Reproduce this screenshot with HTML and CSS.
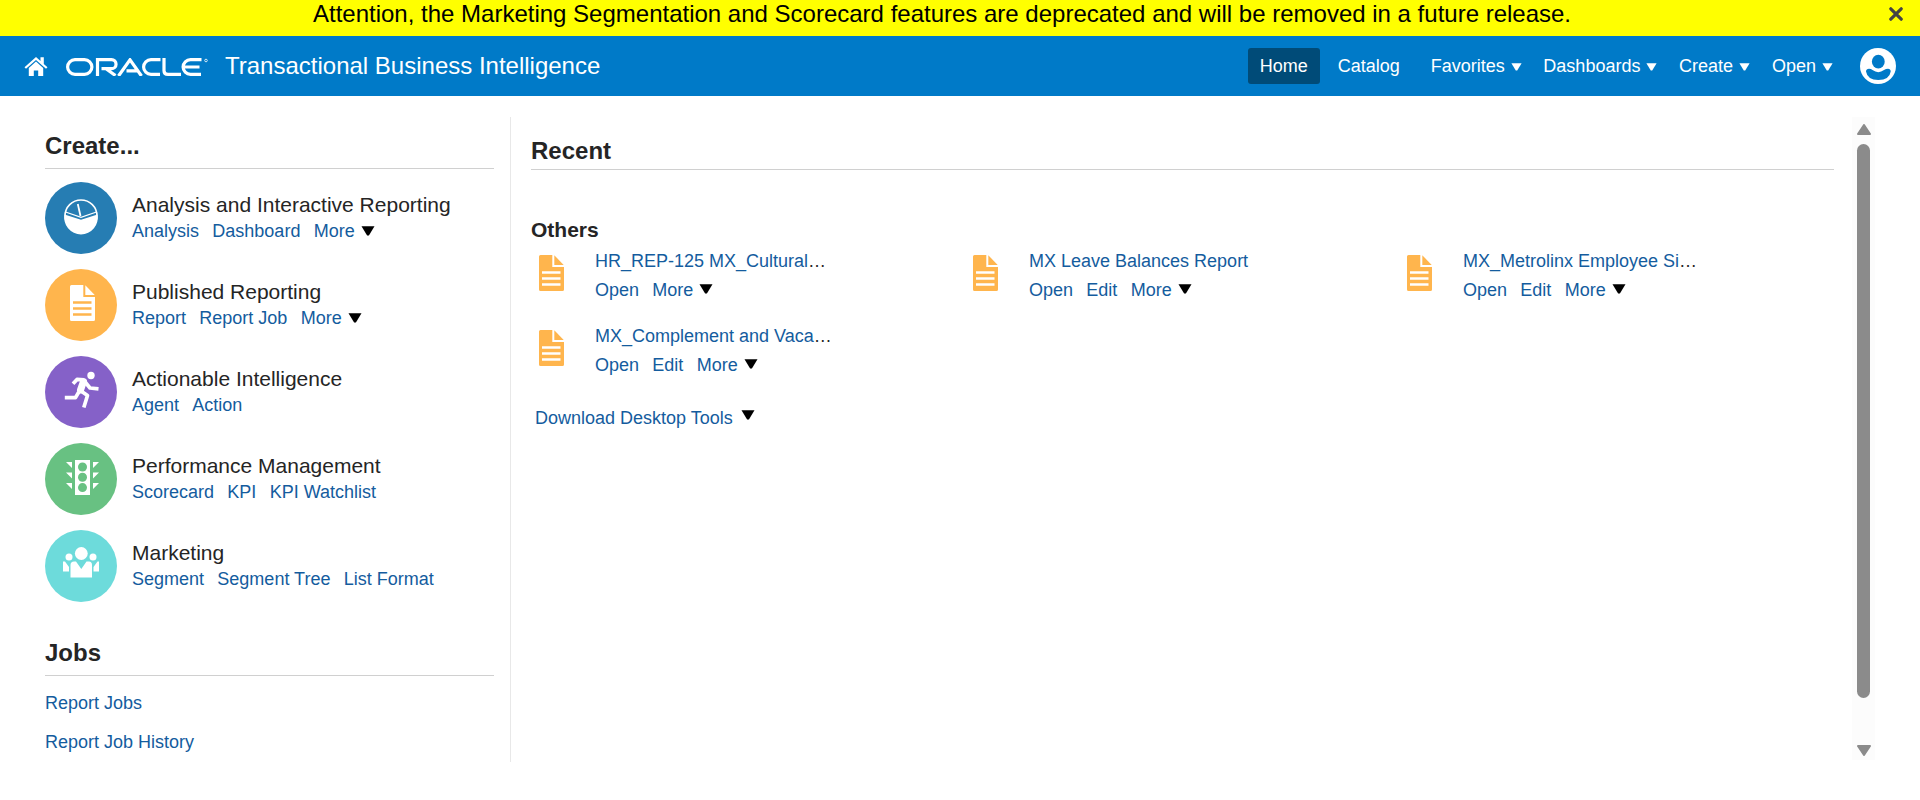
FILE: index.html
```html
<!DOCTYPE html>
<html lang="en">
<head>
<meta charset="utf-8">
<title>Transactional Business Intelligence</title>
<link rel="stylesheet" href="styles.css">
</head>
<body>
<svg width="0" height="0" class="defs">
  <symbol id="doc" viewBox="0 0 25 36">
    <path fill="currentColor" fill-rule="evenodd" d="M1.500 0H13.300V12H25V34.500Q25 36 23.500 36H1.500Q0 36 0 34.500V1.500Q0 0 1.500 0ZM3 16.300V18.700H21.500V16.300ZM3 22.300V24.700H21.500V22.300ZM3 28.300V30.700H21.500V28.300Z"/>
    <path fill="currentColor" d="M15.300 .3L24.700 10H15.300Z"/>
  </symbol>
  <symbol id="tri" viewBox="0 0 14 10"><path fill="currentColor" d="M.5 .3H13.500L7.900 9.600H6.100Z"/></symbol>
</svg>
<div class="notice">
  <span class="notice-text">Attention, the Marketing Segmentation and Scorecard features are deprecated and will be removed in a future release.</span>
  <svg class="close" viewBox="0 0 14 14"><path d="M1.800 1.800L12.200 12.200M12.200 1.800L1.800 12.200" stroke="#444" stroke-width="3.200" stroke-linecap="round"/></svg>
</div>
<header class="bar">
  <svg class="home" viewBox="0 0 23 19"><path fill="#fff" d="M11.500 0L16 4V.3H19.300V7L23 10.300L21.500 11.800L11.500 2.900L1.500 11.800L0 10.300Z"/><path fill="#fff" d="M11.500 4.500L18.700 11V19H13.700V13.500H9.300V19H4.300V11Z"/></svg>
  <svg class="logo" viewBox="0 0 142 18" fill="none" stroke="#fff" stroke-width="3.200">
    <path d="M9 1.600H18.500A7.400 7.400 0 0 1 18.500 16.400H9A7.400 7.400 0 0 1 9 1.600Z"/>
    <path d="M31.500 18V1.600H45.500A4.500 4.500 0 0 1 45.500 10.700H35.500M40 10.700L49.500 17.600"/>
    <path d="M52.500 18L64 1.800L75.500 18M60.500 12.800H71.500"/>
    <path d="M94.500 1.600H85A7.400 7.400 0 0 0 85 16.400H94"/>
    <path d="M98 0V12.800Q98 16.400 102 16.400H115"/>
    <path d="M135.500 1.600H124.500A7.400 7.400 0 0 0 124.500 16.400H135M118 9H133.500"/>
    <circle cx="140" cy="2.500" r="1.300" stroke-width=".8"/>
  </svg>
  <h1>Transactional Business Intelligence</h1>
  <nav>
    <a class="active">Home</a>
    <a class="catalog">Catalog</a>
    <a class="fav">Favorites<svg><use href="#tri"/></svg></a>
    <a class="dash">Dashboards<svg><use href="#tri"/></svg></a>
    <a class="create">Create<svg><use href="#tri"/></svg></a>
    <a class="open">Open<svg><use href="#tri"/></svg></a>
  </nav>
  <svg class="user" viewBox="0 0 36 36"><circle cx="18" cy="18" r="18" fill="#fff"/><ellipse cx="18.300" cy="13.700" rx="6.400" ry="6.900" fill="#007ac8"/><path d="M6 23.500Q6.200 20.800 9 20.700Q11 20.700 12.500 22Q18.300 26.300 24 22Q26 20.700 28 20.700Q30.600 20.800 30.700 23.500Q29.500 32 18.300 32Q7.500 32 6 23.500Z" fill="#007ac8"/></svg>
</header>
<main>
  <aside>
    <h2 class="create-title">Create...</h2>
    <section class="item">
      <svg class="badge" viewBox="0 0 72 72"><circle cx="36" cy="36" r="36" fill="#267db3"/><circle cx="36" cy="34" r="16" fill="none" stroke="#fff" stroke-width="1.600"/><path d="M19.500 32.500L36 37.800L52.500 32.500A16.800 16.800 0 1 1 19.500 32.500Z" fill="#fff"/><path d="M20.500 30L36 35.300L51.500 30" fill="none" stroke="#fff" stroke-width="1.200"/><path d="M32.800 22L35.500 34" stroke="#fff" stroke-width="1.800"/></svg>
      <div><h3>Analysis and Interactive Reporting</h3><p class="links"><a>Analysis</a><a>Dashboard</a><a>More</a><svg><use href="#tri"/></svg></p></div>
    </section>
    <section class="item">
      <svg class="badge" viewBox="0 0 72 72"><circle cx="36" cy="36" r="36" fill="#ffb54d"/><use href="#doc" x="25" y="16" width="25" height="36" color="#fff"/></svg>
      <div><h3>Published Reporting</h3><p class="links"><a>Report</a><a>Report Job</a><a>More</a><svg><use href="#tri"/></svg></p></div>
    </section>
    <section class="item">
      <svg class="badge" viewBox="0 0 72 72"><circle cx="36" cy="36" r="36" fill="#8561c8"/><circle cx="46" cy="19.500" r="3.700" fill="#fff"/><path d="M28 27.800L32 23.400L39 23.800M40.500 26.500L45 32L53.500 32.800M36 35L42.500 39.500L38.800 51.500M33.800 36L30.500 41.600H19.800" fill="none" stroke="#fff" stroke-width="3.700" stroke-linejoin="round"/><path d="M38.500 25.500L35.500 34" stroke="#fff" stroke-width="7" stroke-linecap="round"/></svg>
      <div><h3>Actionable Intelligence</h3><p class="links"><a>Agent</a><a>Action</a></p></div>
    </section>
    <section class="item">
      <svg class="badge" viewBox="0 0 72 72"><circle cx="36" cy="36" r="36" fill="#68c182"/><rect x="30" y="17" width="15" height="35" fill="#fff"/><g fill="#68c182"><circle cx="37.500" cy="24" r="4.500"/><circle cx="37.500" cy="34.300" r="4.500"/><circle cx="37.500" cy="44.600" r="4.500"/></g><path fill="#fff" d="M21 19H27V25ZM21 29.500H27V35.500ZM21 40H27V46ZM54 19H48V25ZM54 29.500H48V35.500ZM54 40H48V46Z"/></svg>
      <div><h3>Performance Management</h3><p class="links"><a>Scorecard</a><a>KPI</a><a>KPI Watchlist</a></p></div>
    </section>
    <section class="item">
      <svg class="badge" viewBox="0 0 72 72"><circle cx="36" cy="36" r="36" fill="#6ddbdb"/><g fill="#fff"><circle cx="36.300" cy="23.500" r="6.400"/><circle cx="24" cy="27" r="3.500"/><circle cx="48" cy="27" r="3.500"/><path d="M25.500 47.500V35Q25.500 31.500 29 31.500H31L36.300 39L41.500 31.500H44Q47 31.500 47 35V47.500ZM18 31.500H20L24 37V41.500H18ZM54 31.500H52.500L48.500 37V41.500H54Z"/></g></svg>
      <div><h3>Marketing</h3><p class="links"><a>Segment</a><a>Segment Tree</a><a>List Format</a></p></div>
    </section>
    <h2 class="jobs-title">Jobs</h2>
    <ul class="jobs"><li><a>Report Jobs</a></li><li><a>Report Job History</a></li></ul>
  </aside>
  <section class="recent">
    <h2 class="recent-title">Recent</h2>
    <h4>Others</h4>
    <div class="grid">
      <article><svg class="doc"><use href="#doc"/></svg><div><p class="name"><a>HR_REP-125 MX_Cultural</a>…</p><p class="links"><a>Open</a><a>More</a><svg><use href="#tri"/></svg></p></div></article>
      <article><svg class="doc"><use href="#doc"/></svg><div><p class="name"><a>MX Leave Balances Report</a></p><p class="links"><a>Open</a><a>Edit</a><a>More</a><svg><use href="#tri"/></svg></p></div></article>
      <article><svg class="doc"><use href="#doc"/></svg><div><p class="name"><a>MX_Metrolinx Employee Si</a>…</p><p class="links"><a>Open</a><a>Edit</a><a>More</a><svg><use href="#tri"/></svg></p></div></article>
      <article><svg class="doc"><use href="#doc"/></svg><div><p class="name"><a>MX_Complement and Vaca</a>…</p><p class="links"><a>Open</a><a>Edit</a><a>More</a><svg><use href="#tri"/></svg></p></div></article>
    </div>
    <p class="links download"><a>Download Desktop Tools</a><svg><use href="#tri"/></svg></p>
  </section>
  <div class="scroll">
    <svg class="arrow" viewBox="0 0 14 11"><path d="M7 1L13 10H1Z" fill="#8b8b8b" stroke="#8b8b8b" stroke-width="2" stroke-linejoin="round"/></svg>
    <div class="thumb"></div>
    <svg class="arrow down" viewBox="0 0 14 11"><path d="M7 10L1 1H13Z" fill="#8b8b8b" stroke="#8b8b8b" stroke-width="2" stroke-linejoin="round"/></svg>
  </div>
</main>
</body>
</html>
```
FILE: styles.css
```css
* { box-sizing: border-box; margin: 0; padding: 0; }
body { font-family: "Liberation Sans", Arial, sans-serif; font-size: 18px; color: #252525; background: #fff; height: 800px; overflow: hidden; }
.defs { display: block; height: 0; }
svg { flex: none; }
.notice { height: 36px; background: #ff0; color: #000; display: flex; align-items: flex-start; padding: 0 17px 0 0; }
.notice-text { flex: 1; padding-right: 5px; text-align: center; font-size: 24px; line-height: 28px; white-space: nowrap; }
.close { width: 14px; height: 14px; margin-top: 7px; }
.bar { height: 60px; background: #007ac8; color: #fff; display: flex; align-items: center; padding: 0 24px 0 24px; }
.home { width: 24px; height: 19px; margin-top: 1px; }
.logo { width: 142px; height: 18px; margin: 2px 0 0 18px; }
h1 { font-weight: 400; font-size: 24px; line-height: 28px; margin-left: 17px; white-space: nowrap; }
nav { display: flex; align-items: center; margin-left: auto; }
nav a { white-space: nowrap; display: flex; align-items: center; }
nav svg { width: 11px; height: 8px; margin: 2px 0 0 6px; }
.active { background: #004b78; border-radius: 3px; height: 36px; width: 72px; justify-content: center; }
.catalog { margin-left: 18px; }
.fav { margin-left: 31px; }
.dash, .create { margin-left: 21.500px; }
.open { margin-left: 22px; }
.user { width: 36px; height: 36px; margin-left: 27px; }
main { display: flex; padding-top: 21px; height: 666px; }
aside { width: 511px; flex: none; border-right: 1px solid #e8e8e8; padding: 14px 16px 0 45px; margin-right: 0; }
h2 { font-size: 24px; line-height: 28px; border-bottom: 1px solid #d0d0d0; white-space: nowrap; }
.create-title { height: 38px; padding-top: 1px; margin-bottom: 13px; }
.item { display: flex; gap: 15px; height: 72px; margin-bottom: 15px; }
.badge { width: 72px; height: 72px; }
h3 { font-size: 21px; font-weight: 400; line-height: 24px; padding-top: 11px; white-space: nowrap; }
a { color: #145c9e; }
nav a { color: #fff; }
.links { display: flex; line-height: 20px; margin-top: 4px; white-space: nowrap; gap: 13.300px; }
.links svg { color: #000; width: 14px; height: 10px; margin: 5px 0 0 -7.300px; }
.jobs-title { height: 37px; margin-top: 37px; }
.jobs { list-style: none; padding-top: 17px; line-height: 20px; }
.jobs li { margin-bottom: 19px; }
.recent { padding: 19px 0 0 20px; width: 1323px; flex: none; }
.recent-title { height: 34px; padding-top: 1px; line-height: 28px; }
h4 { font-size: 21px; line-height: 24px; margin-top: 48px; }
.grid { display: grid; grid-template-columns: repeat(3, 434px); grid-auto-rows: 75px; padding-top: 8px; }
article { display: flex; padding-left: 8px; }
.doc { width: 25px; height: 36px; color: #ffb54d; margin-top: 5px; }
article > div { margin-left: 31px; padding-top: 1px; }
.name { line-height: 20px; white-space: nowrap; }
article .links { margin-top: 9px; }
article .links svg { margin-top: 4px; }
.download { margin: 8px 0 0 4px; }
.download svg { margin: 2px 0 0 -5.300px; }
.scroll { width: 23px; height: 643px; margin-left: 18px; background: #fcfcfc; display: flex; flex-direction: column; align-items: center; padding-top: 7px; }
.arrow { width: 14px; height: 11px; }
.thumb { width: 13px; height: 554px; margin-top: 9px; border-radius: 7px; background: #8b8b8b; }
.down { margin-top: 47px; }
```
